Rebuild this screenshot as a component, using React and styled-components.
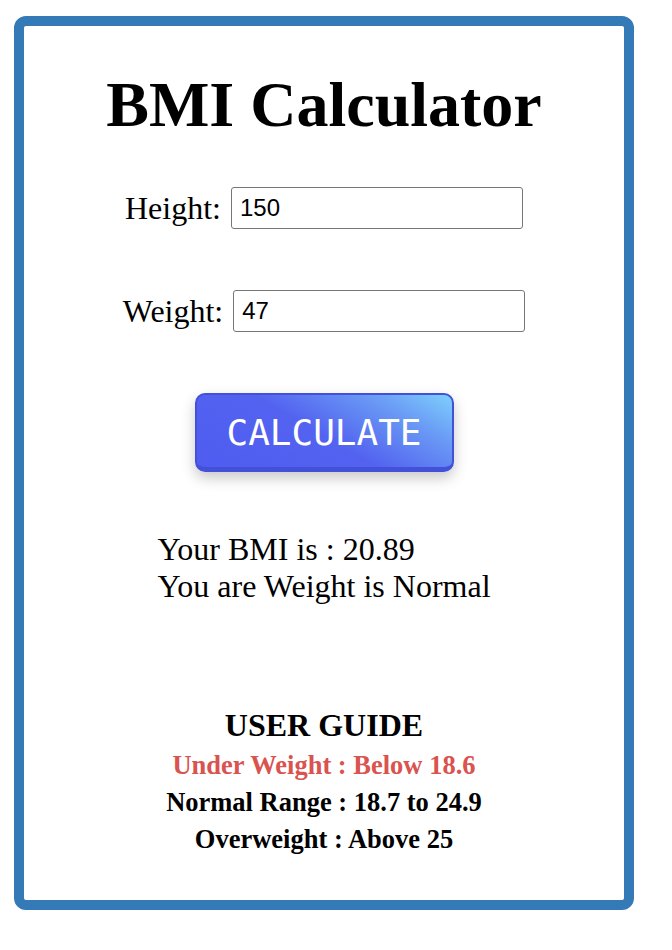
import React, { useState } from "react"
import styled, { createGlobalStyle } from "styled-components"

const GlobalStyle = createGlobalStyle`
    body {
        margin: 0;
        background: #ffffff;
        font-family: "Liberation Serif", "Times New Roman", serif;
        color: #000;
    }
`

const Frame = styled.div`
    box-sizing: border-box;
    margin: 16px 0 0 14px;
    width: 620px;
    height: 894px;
    border: 10px solid #337ab7;
    border-radius: 12px;
    display: flex;
    flex-direction: column;
    align-items: center;
`

const Title = styled.h1`
    margin: 47px 0 0;
    font-size: 64px;
    line-height: 64px;
    font-weight: bold;
`

const Field = styled.div`
    display: flex;
    align-items: center;
    gap: 10px;
    margin-top: ${(p) => p.$top}px;
`

const Label = styled.label`
    font-size: 32px;
    line-height: 32px;
`

const Input = styled.input`
    box-sizing: border-box;
    width: 292px;
    height: 42px;
    padding: 0 8px;
    border: 1px solid #767676;
    border-radius: 3px;
    font-family: "Liberation Sans", Arial, sans-serif;
    font-size: 24px;
    color: #000;
    outline: none;
`

const CalcButton = styled.button`
    box-sizing: border-box;
    margin-top: 61px;
    width: 259px;
    height: 79px;
    border: 2px solid #4350d8;
    border-bottom-width: 5px;
    border-radius: 10px;
    background: linear-gradient(30deg, #4f5cf0 0%, #5363f0 48%, #6a9bf5 78%, #7dd0fd 100%);
    box-shadow: 0 6px 14px rgba(0, 0, 0, 0.22);
    color: #fff;
    font-family: "DejaVu Sans Mono", Menlo, monospace;
    font-size: 36px;
    padding: 2px 0 0;
    cursor: pointer;
`

const Result = styled.div`
    margin-top: 59px;
    font-size: 32px;
    line-height: 37px;
    text-align: left;
`

const Guide = styled.div`
    margin-top: 102px;
    text-align: center;
    font-weight: bold;
`

const GuideTitle = styled.div`
    font-size: 32px;
    line-height: 36px;
    margin-bottom: 4px;
`

const GuideLine = styled.div`
    font-size: 26.5px;
    line-height: 37px;
    color: ${(p) => (p.$warn ? "#d9534f" : "#000")};
`

function App() {
    const [height, setHeight] = useState("150")
    const [weight, setWeight] = useState("47")
    const [bmi, setBmi] = useState(20.89)

    const calculate = () => {
        const h = parseFloat(height) / 100
        const w = parseFloat(weight)
        if (h > 0 && w > 0) setBmi(Math.round((w / (h * h)) * 100) / 100)
    }

    const status = bmi < 18.7 ? "Under Weight" : bmi <= 24.9 ? "Normal" : "Overweight"

    return (
        <>
            <GlobalStyle />
            <Frame>
                <Title>BMI Calculator</Title>

                <Field $top={50}>
                    <Label>Height:</Label>
                    <Input value={height} onChange={(e) => setHeight(e.target.value)} />
                </Field>
                <Field $top={61}>
                    <Label>Weight:</Label>
                    <Input value={weight} onChange={(e) => setWeight(e.target.value)} />
                </Field>

                <CalcButton onClick={calculate}>CALCULATE</CalcButton>

                <Result>
                    <div>Your BMI is : {bmi}</div>
                    <div>You are Weight is {status}</div>
                </Result>

                <Guide>
                    <GuideTitle>USER GUIDE</GuideTitle>
                    <GuideLine $warn>Under Weight : Below 18.6</GuideLine>
                    <GuideLine>Normal Range : 18.7 to 24.9</GuideLine>
                    <GuideLine>Overweight : Above 25</GuideLine>
                </Guide>
            </Frame>
        </>
    )
}

export default App
